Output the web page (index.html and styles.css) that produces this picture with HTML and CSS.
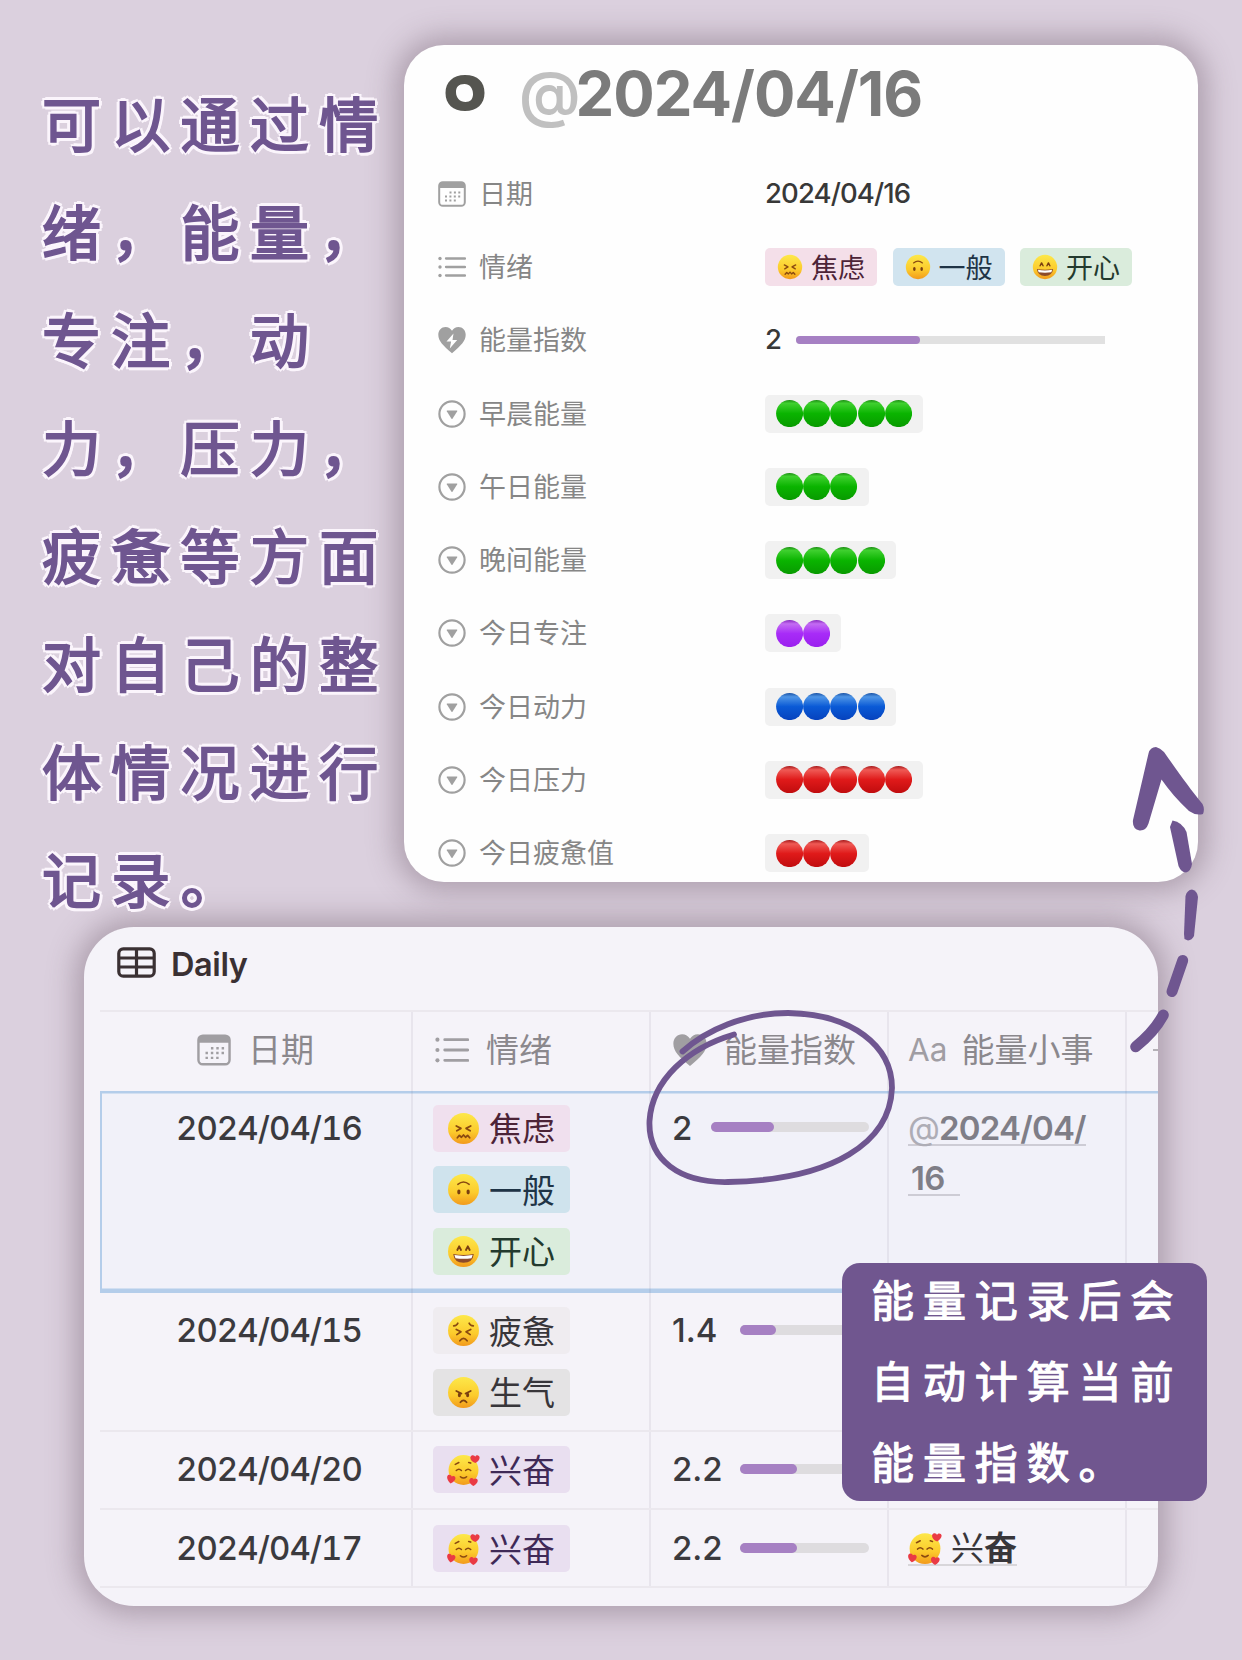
FILE: index.html
```html
<!DOCTYPE html>
<html lang="zh-CN">
<head>
<meta charset="utf-8">
<title>Daily</title>
<link rel="stylesheet" href="styles.css">
</head>
<body>
<svg class="defs" aria-hidden="true">
  <defs>
    <linearGradient id="skin" x1="0" y1="0" x2="0" y2="1"><stop offset="0" stop-color="#fde84a"/><stop offset=".6" stop-color="#fccb2c"/><stop offset="1" stop-color="#f29a1c"/></linearGradient>
    <linearGradient id="green" x1="0" y1="0" x2="0" y2="1"><stop offset="0" stop-color="#1d8f14"/><stop offset=".12" stop-color="#3fd02f"/><stop offset=".5" stop-color="#0ab400"/><stop offset="1" stop-color="#089a00"/></linearGradient>
    <linearGradient id="violet" x1="0" y1="0" x2="0" y2="1"><stop offset="0" stop-color="#8a2cc0"/><stop offset=".14" stop-color="#c36cf2"/><stop offset=".5" stop-color="#a82bf8"/><stop offset="1" stop-color="#9a20ee"/></linearGradient>
    <linearGradient id="blue" x1="0" y1="0" x2="0" y2="1"><stop offset="0" stop-color="#1c55a8"/><stop offset=".14" stop-color="#4e95e6"/><stop offset=".5" stop-color="#0a5ad6"/><stop offset="1" stop-color="#0642bd"/></linearGradient>
    <linearGradient id="red" x1="0" y1="0" x2="0" y2="1"><stop offset="0" stop-color="#a81a1c"/><stop offset=".14" stop-color="#ef5a55"/><stop offset=".5" stop-color="#e01a1a"/><stop offset="1" stop-color="#c00c0e"/></linearGradient>
    <symbol id="anxious" viewBox="0 0 32 32"><circle cx="16" cy="16" r="15" fill="url(#skin)"/><g fill="none" stroke="#8a4a10" stroke-width="1.7" stroke-linecap="round" stroke-linejoin="round"><path d="M9 13.500l4.500 2.400-4 2.400M23 13.500l-4.500 2.400 4 2.400"/><path d="M10 25l2-2.300 2 1.800 2-2.200 2 2.200 2-1.800 2 2.300"/></g></symbol>
    <symbol id="upside" viewBox="0 0 32 32"><circle cx="16" cy="16" r="15" fill="url(#skin)"/><path d="M10.500 11q5.500-4.500 11 0" fill="none" stroke="#8a4a10" stroke-width="1.500" stroke-linecap="round"/><ellipse cx="11.500" cy="18.500" rx="1.600" ry="2.400" fill="#7a3f10"/><ellipse cx="20.500" cy="18.500" rx="1.600" ry="2.400" fill="#7a3f10"/></symbol>
    <symbol id="grin" viewBox="0 0 32 32"><circle cx="16" cy="16" r="15" fill="url(#skin)"/><path d="M10 14.500l1.800-3.500 1.800 3.500M18.400 14.500l1.800-3.500 1.800 3.500" fill="none" stroke="#7a3f10" stroke-width="1.800" stroke-linecap="round" stroke-linejoin="round"/><path d="M6 18.500q10 2 20 0-1 8.500-10 8.500t-10-8.500z" fill="#8c4a2a"/><path d="M7.200 19.500q8.800 1.500 17.600 0l-1 3q-7.800 1.200-15.600 0z" fill="#fff"/></symbol>
    <symbol id="tired" viewBox="0 0 32 32"><circle cx="16" cy="16" r="15" fill="url(#skin)"/><g fill="none" stroke="#8a4a10" stroke-width="1.700" stroke-linecap="round" stroke-linejoin="round"><path d="M9 15l4.500 2.300L9.500 20M23 15l-4.500 2.300L22.500 20M6.500 11.500q3 0 4-2.500M25.500 11.500q-3 0-4-2.500M12.500 26q3.500-4.500 7 0"/></g></symbol>
    <symbol id="angry" viewBox="0 0 32 32"><circle cx="16" cy="16" r="15" fill="url(#skin)"/><path d="M9 14.500l5 2.500M23 14.500l-5 2.500M13 25.500q3-3.500 6 0" fill="none" stroke="#7a3f10" stroke-width="1.700" stroke-linecap="round"/><ellipse cx="12" cy="18.500" rx="1.500" ry="2.200" fill="#7a3f10"/><ellipse cx="20" cy="18.500" rx="1.500" ry="2.200" fill="#7a3f10"/></symbol>
    <symbol id="love" viewBox="0 0 32 32"><circle cx="16" cy="16.500" r="14.500" fill="url(#skin)"/><path d="M9 17q2.500-2.600 5 0M18 17q2.500-2.600 5 0M13 23q3 2.600 6 0M8 11l3.500-1.800M21 9.200l2 .6" fill="none" stroke="#8a4a10" stroke-width="1.500" stroke-linecap="round"/><g fill="#ea3a44"><path d="M27.500 9.800c-5-1.800-6-6-3.600-7.400 1.800-1 3.200.6 3.400 1.200.4-1 2-2 3.600-.8 2 2-.4 5.600-3.400 7z"/><path d="M3.500 29.500c-4-3.500-4.300-7.500-1.700-8.300 1.700-.4 2.700 1 2.700 1.700.7-.7 2.700-1 3.500.6.900 2.300-2 5-4.500 6z"/><path d="M25.500 32c-4-2-5-6-2.600-7.500 1.600-.8 2.900.5 3 1.200.6-1 2.600-1.400 3.600 0 1.200 2.100-1.400 5-4 6.300z"/></g></symbol>
    <symbol id="calendar" viewBox="0 0 28 26"><rect x="1.200" y="1.200" width="25.600" height="23.600" rx="3.600" fill="none" stroke="currentColor" stroke-width="2"/><path d="M1.500 7V4.500Q1.500 1.500 5 1.500h18q3.500 0 3.500 3V7z" fill="currentColor"/><path d="M11.500 11.500h11.500M7 15.500h16M7 19.500h11.500" stroke="currentColor" stroke-width="2" stroke-dasharray="2 2.400"/></symbol>
    <symbol id="list" viewBox="0 0 28 26"><path d="M8 4.500h19M8 13h19M8 21.500h19" stroke="currentColor" stroke-width="2.300" stroke-linecap="round"/><g fill="currentColor"><circle cx="2" cy="4.500" r="1.700"/><circle cx="2" cy="13" r="1.700"/><circle cx="2" cy="21.500" r="1.700"/></g></symbol>
    <symbol id="heart" viewBox="0 0 28 28"><path d="M14 27.200C5 19.500.3 15 .3 8.800.3 4.300 3.500 1 7.500 1 10.300 1 12.600 2.400 14 4.800 15.400 2.400 17.700 1 20.500 1c4 0 7.200 3.300 7.200 7.800 0 6.200-4.700 10.700-13.700 18.400z" fill="currentColor"/></symbol>
    <symbol id="bolt" viewBox="0 0 28 28"><path d="M15.500 7.500L8.500 15.500h4.600l-1.300 7 7.400-8.500h-4.700z" fill="#fff"/></symbol>
    <symbol id="select" viewBox="0 0 28 28"><circle cx="14" cy="14" r="12.600" fill="none" stroke="currentColor" stroke-width="2.200"/><path d="M9.200 10.500h9.600q.8 0 .4.700l-4.700 7.500q-.5.700-1 0L8.800 11.200q-.4-.7.400-.7z" fill="currentColor"/></symbol>
    <symbol id="dot" viewBox="0 0 28 28"><circle cx="14" cy="14" r="13.900"/></symbol>
  </defs>
</svg>

<main class="poster">
  <section class="top">
    <p class="intro">可以通过情<br>绪，能量，<br>专注，动<br>力，压力，<br>疲惫等方面<br>对自己的整<br>体情况进行<br>记录。</p>
    <article class="detail">
      <h1 class="detail-title">
        <svg class="ring" viewBox="0 0 40 36"><path d="M20 0C33 0 39.500 7 39.500 18S32 36 20 36 .5 29 .5 18 8 0 20 0zm-.500 9c-6 0-8.500 3-8.500 8 0 6 4 10 9.500 10 5 0 7.500-3 7.500-8 0-6-3.500-10-8.500-10z" fill="#555550" fill-rule="evenodd"/></svg>
        <span class="title-text"><span class="at">@</span>2024/04/16</span>
      </h1>
      <div class="prop"><svg class="icon cal"><use href="#calendar"/></svg><span class="name">日期</span><span class="num">2024/04/16</span></div>
      <div class="prop"><svg class="icon"><use href="#list"/></svg><span class="name">情绪</span><div class="tags"><span class="tag pink"><svg><use href="#anxious"/></svg>焦虑</span><span class="tag sky"><svg><use href="#upside"/></svg>一般</span><span class="tag mint"><svg><use href="#grin"/></svg>开心</span></div></div>
      <div class="prop"><svg class="icon"><use href="#heart"/><use href="#bolt"/></svg><span class="name">能量指数</span><div class="meter"><span class="num">2</span><span class="bar"><i style="width:40%"></i></span></div></div>
      <div class="prop"><svg class="icon"><use href="#select"/></svg><span class="name">早晨能量</span><span class="dots green"><svg><use href="#dot"/></svg><svg><use href="#dot"/></svg><svg><use href="#dot"/></svg><svg><use href="#dot"/></svg><svg><use href="#dot"/></svg></span></div>
      <div class="prop"><svg class="icon"><use href="#select"/></svg><span class="name">午日能量</span><span class="dots green"><svg><use href="#dot"/></svg><svg><use href="#dot"/></svg><svg><use href="#dot"/></svg></span></div>
      <div class="prop"><svg class="icon"><use href="#select"/></svg><span class="name">晚间能量</span><span class="dots green"><svg><use href="#dot"/></svg><svg><use href="#dot"/></svg><svg><use href="#dot"/></svg><svg><use href="#dot"/></svg></span></div>
      <div class="prop"><svg class="icon"><use href="#select"/></svg><span class="name">今日专注</span><span class="dots violet"><svg><use href="#dot"/></svg><svg><use href="#dot"/></svg></span></div>
      <div class="prop"><svg class="icon"><use href="#select"/></svg><span class="name">今日动力</span><span class="dots blue"><svg><use href="#dot"/></svg><svg><use href="#dot"/></svg><svg><use href="#dot"/></svg><svg><use href="#dot"/></svg></span></div>
      <div class="prop"><svg class="icon"><use href="#select"/></svg><span class="name">今日压力</span><span class="dots red"><svg><use href="#dot"/></svg><svg><use href="#dot"/></svg><svg><use href="#dot"/></svg><svg><use href="#dot"/></svg><svg><use href="#dot"/></svg></span></div>
      <div class="prop"><svg class="icon"><use href="#select"/></svg><span class="name">今日疲惫值</span><span class="dots red"><svg><use href="#dot"/></svg><svg><use href="#dot"/></svg><svg><use href="#dot"/></svg></span></div>
    </article>
  </section>

  <section class="daily">
    <h2 class="daily-title"><svg viewBox="0 0 39 31"><rect x="1.800" y="1.800" width="35.400" height="27.400" rx="4.500"/><path d="M2 11h35M2 20h35M19.500 2v27"/></svg><span>Daily</span></h2>
    <div class="table">
      <div class="row head">
        <div class="cell date"><svg class="hicon"><use href="#calendar"/></svg><span>日期</span></div>
        <div class="cell"><svg class="hicon"><use href="#list"/></svg><span>情绪</span></div>
        <div class="cell"><svg class="hicon"><use href="#heart"/></svg><span>能量指数</span></div>
        <div class="cell aa"><b>Aa</b><span>能量小事</span></div>
        <div class="cell more"><i></i></div>
      </div>
      <div class="row r1">
        <div class="cell date"><span class="num">2024/04/16</span></div>
        <div class="cell moods"><span class="tag pink"><svg><use href="#anxious"/></svg>焦虑</span><span class="tag sky"><svg><use href="#upside"/></svg>一般</span><span class="tag mint"><svg><use href="#grin"/></svg>开心</span></div>
        <div class="cell"><div class="meter"><span class="num">2</span><span class="bar"><i style="width:40%"></i></span></div></div>
        <div class="cell link"><span class="mention"><span class="at">@</span>2024/04/</span><span class="mention rest">16</span></div>
        <div class="cell"></div>
      </div>
      <div class="row r2">
        <div class="cell date"><span class="num">2024/04/15</span></div>
        <div class="cell moods"><span class="tag pale"><svg><use href="#tired"/></svg>疲惫</span><span class="tag gray"><svg><use href="#angry"/></svg>生气</span></div>
        <div class="cell"><div class="meter"><span class="num decimal">1.4</span><span class="bar"><i style="width:28%"></i></span></div></div>
        <div class="cell"></div>
        <div class="cell"></div>
      </div>
      <div class="row r3">
        <div class="cell date"><span class="num">2024/04/20</span></div>
        <div class="cell moods"><span class="tag lilac"><svg><use href="#love"/></svg>兴奋</span></div>
        <div class="cell"><div class="meter"><span class="num decimal">2.2</span><span class="bar"><i style="width:44%"></i></span></div></div>
        <div class="cell"></div>
        <div class="cell"></div>
      </div>
      <div class="row r4">
        <div class="cell date"><span class="num">2024/04/17</span></div>
        <div class="cell moods"><span class="tag lilac"><svg><use href="#love"/></svg>兴奋</span></div>
        <div class="cell"><div class="meter"><span class="num decimal">2.2</span><span class="bar"><i style="width:44%"></i></span></div></div>
        <div class="cell link"><span class="page"><svg><use href="#love"/></svg>兴<b>奋</b></span></div>
        <div class="cell"></div>
      </div>
    </div>
  </section>

  <svg class="ink" viewBox="0 0 1242 1660">
    <path class="fill" d="M1148.500 753.500Q1150 747 1156 747 1160 748 1164 752C1176 769 1190 789 1202.500 804Q1205 809 1203 814 1196 816 1189 811C1178 801 1169 790 1161.500 779.500L1148.500 823.500Q1146 831 1139.500 830.500 1132 829 1133 820z"/>
    <path class="fill" d="M1170 827L1172.500 820.500Q1182 822 1186.500 832L1192 864Q1191 871 1186 872.500 1181 872 1178.500 866z"/>
    <path class="fill" d="M1185.500 896Q1187 890 1192 889.500 1197.500 891 1198 897L1194 936Q1192 940 1188 940.500L1184.500 939 1184 934z"/>
    <path d="M1182.700 960.500L1172 991.500" stroke-width="11"/>
    <path d="M1163.300 1015Q1154 1032 1135.700 1046.700" stroke-width="11"/>
    <path d="M682.500 1051.500C706 1030 745 1013 788 1013 852 1014 892 1046 892 1088 890 1142 834 1180 728 1182 680 1183 648 1160 649.500 1121 652 1080 688 1048 734 1034.500" stroke-width="5.800"/>
  </svg>
  <aside class="callout">能量记录后会<br>自动计算当前<br>能量指数。</aside>
</main>
</body>
</html>
```

FILE: styles.css
```css
* { box-sizing: border-box; }
body { margin: 0; font-family: Inter, "Noto Sans CJK SC", sans-serif; }
p, h1, h2 { margin: 0; }
.defs { position: absolute; width: 0; height: 0; }
.poster {
  position: relative;
  width: 1242px;
  height: 1660px;
  overflow: hidden;
  background: #dbd0de;
}

/* top part: intro text and detail card */
.top { display: flex; height: 927px; padding-top: 45px; }
.intro {
  width: 404px;
  padding: 27px 0 0 42px;
  font-size: 59px;
  line-height: 108px;
  letter-spacing: 10.3px;
  font-weight: 400;
  white-space: nowrap;
  color: #6f5690;
  -webkit-text-stroke: 2px #6f5690;
  text-shadow: 4px 0 #fbf5fc, -4px 0 #fbf5fc, 0 4px #fbf5fc, 0 -4px #fbf5fc,
    3px 3px #fbf5fc, -3px 3px #fbf5fc, 3px -3px #fbf5fc, -3px -3px #fbf5fc;
}
.detail {
  width: 794px;
  height: 837px;
  padding: 0 0 0 34px;
  border-radius: 40px;
  background: #fefefe;
  box-shadow: 0 0 28px 9px rgba(100, 80, 95, .38);
}
.detail-title { display: flex; align-items: center; height: 112px; padding: 0 0 16px 7px; font-size: 61.5px; }
.ring { width: 40px; height: 36px; margin-right: 34px; }
.title-text { font-weight: 700; letter-spacing: -1.0px; color: #7b7b7b; white-space: nowrap; }
.title-text .at { color: #c0c0c0; font-weight: 600; letter-spacing: -5px; }
.prop { display: flex; align-items: center; height: 73.3px; font-size: 27px; color: #383838; }
.icon { width: 28px; height: 28px; color: #a0a0a0; }
.name { width: 286px; margin: -3px 0 0 13px; color: #868686; }
.prop .num { margin-top: -2px; font-size: 27.5px; font-weight: 450; letter-spacing: -.9px; }
.tags { display: flex; gap: 15.500px; }
.tag { display: flex; align-items: center; width: 112px; height: 38px; padding: 0 0 1px 12px; border-radius: 5px; font-size: 27px; white-space: nowrap; }
.tag svg { width: 26px; height: 26px; margin: 1px 8px 0 0; }
.pink { background: #f4dfe9; color: #4c2337; }
.sky { background: #d1e4ef; color: #1f3446; }
.mint { background: #daecdc; color: #233a2e; }
.meter { display: flex; align-items: center; }
.bar { width: 309px; height: 8px; border-radius: 4px 0 0 4px; background: #e1e1e1; }
.bar i { display: block; height: 100%; border-radius: 5px; background: #a680c3; }
.prop .meter { gap: 15px; }
.dots { display: flex; align-items: center; height: 38px; padding: 0 11px; border-radius: 5px; background: #f1f1f1; }
.dots svg { width: 27.2px; height: 27.2px; }
.green { fill: url(#green); }
.violet { fill: url(#violet); }
.blue { fill: url(#blue); }
.red { fill: url(#red); }

/* daily database card */
.daily {
  width: 1074px;
  height: 679px;
  margin-left: 84px;
  padding-left: 16px;
  overflow: hidden;
  border-radius: 50px;
  background: #f5f3f9;
  box-shadow: 0 0 28px 9px rgba(100, 80, 95, .38);
}
.daily-title { display: flex; align-items: center; gap: 15px; height: 83px; padding: 0 0 9px 17px; font-size: 32.5px; font-weight: 600; letter-spacing: -.4px; color: #3a3033; }
.daily-title svg { width: 39px; height: 31px; margin-top: -4px; fill: none; stroke: #3a3033; stroke-width: 3.2; }
.row { display: grid; grid-template-columns: 313px 238px 238px 238px 31px; border-bottom: 2px solid #ebe8ee; }
.cell { padding-left: 22px; border-right: 2px solid rgba(120, 110, 140, .1); }
.cell:last-child { border-right: 0; }
.head { height: 81px; border-top: 2px solid #ebe8ee; border-bottom: 0; font-size: 33px; color: #8b888d; }
.head .cell { display: flex; align-items: center; gap: 17px; padding-bottom: 3px; white-space: nowrap; }
.head span { margin-top: -4px; }
.head .date { padding-left: 97px; }
.head .aa { gap: 14px; padding-left: 19px; }
.head b { margin-top: -2px; font-size: 31.5px; font-weight: 400; color: #a09da3; }
.hicon { flex: none; width: 34px; height: 34px; color: #a09ea2; }
.more i { width: 6px; height: 2px; margin-left: 4px; background: #b4b1b7; }
.row .num, .mention { height: 47px; line-height: 46px; font-size: 33px; font-weight: 450; color: #3b3a3e; }
.r1 { height: 202px; border: 0; background: #f1f1f9; box-shadow: inset 2px 2.500px #b4cdea, inset 0 -4.500px #b4cdea; }
.r1 .cell { padding-top: 13.5px; }
.r2 { height: 139px; }
.r2 .cell { padding-top: 14px; }
.r3 { height: 78px; }
.r3 .cell { padding-top: 14px; }
.r4 { height: 78px; }
.r4 .cell { padding-top: 15px; }
.row .date .num { display: block; padding-left: 54px; letter-spacing: -.95px; font-variant-numeric: tabular-nums; }
.moods { display: flex; flex-direction: column; gap: 14.6px; }
.moods.cell { padding-left: 20px; }
.moods .tag { flex: none; width: 137px; height: 47px; padding: 0 0 2px 14px; font-size: 33px; }
.moods .tag svg { width: 33px; height: 33px; margin: 2px 9px 0 0; }
.moods .pink { background: #f0e0ee; }
.moods .sky { background: #cfe3ed; }
.pale { background: #efecf0; color: #38363a; }
.gray { background: #e4e3e4; color: #38363a; }
.lilac { background: #e9dff0; color: #3f2a57; }
.daily .meter { padding-right: 18px; }
.daily .meter .num { width: 39px; margin-left: -1px; }
.daily .meter .decimal { width: 68px; }
.daily .bar { flex: 1; width: auto; height: 10px; margin-top: -2px; border-radius: 5px; background: #dedcdf; }
.link.cell { padding-left: 19px; }
.mention { display: block; width: 178px; margin-bottom: 3px; letter-spacing: -.8px; white-space: nowrap; background: linear-gradient(#cdccd5, #cdccd5) 0 39px / 100% 2px no-repeat; }
.row .mention { font-weight: 600; color: #7f7e87; }
.mention .at { font-weight: 400; color: #aeadb6; }
.rest { width: 52px; padding-left: 3px; }
.page { display: flex; align-items: center; width: 109px; height: 41px; padding-top: 3px; font-size: 33px; color: #38363a; border-bottom: 2px solid #d8d6da; }
.page svg { flex: none; width: 34px; height: 34px; margin: 3px 9px 0 0; }

/* hand-drawn marks and callout over the cards */
.ink { position: absolute; inset: 0; width: 1242px; height: 1660px; fill: none; stroke: #6f5690; stroke-linecap: round; }
.ink .fill { fill: #6f5690; stroke: none; }
.callout {
  position: absolute;
  left: 842px;
  top: 1263px;
  width: 365px;
  height: 238px;
  padding-left: 29px;
  border-radius: 18px;
  background: #70568f;
  color: #fff;
  font-size: 43px;
  line-height: 81px;
  letter-spacing: 8.9px;
  font-weight: 400;
  white-space: nowrap;
  -webkit-text-stroke: 1.2px #fff;
}
.callout::before { content: ""; display: block; margin-top: -2px; }
```
